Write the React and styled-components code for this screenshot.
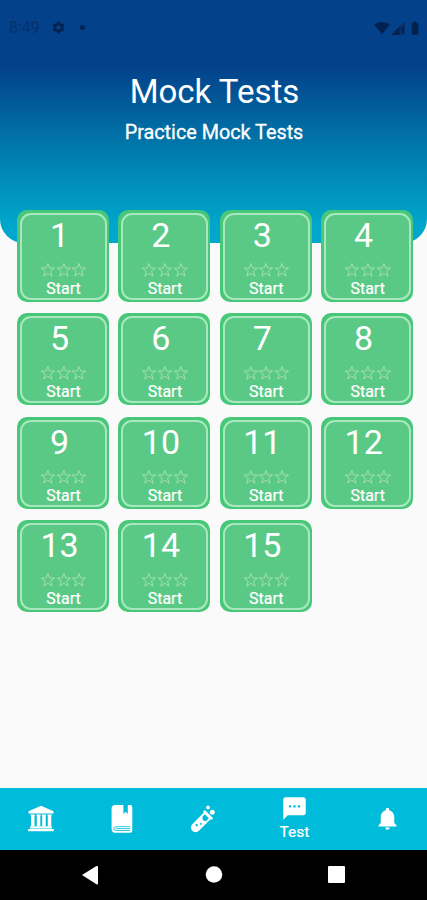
import React from "react";
import styled, { createGlobalStyle } from "styled-components";
import {
  MdSettings,
  MdSignalWifi4Bar,
  MdBatteryFull,
  MdTextsms,
  MdNotifications,
} from "react-icons/md";

const GlobalStyle = createGlobalStyle`
  * {
    box-sizing: border-box;
  }

  body {
    margin: 0;
    background-color: #fafafa;
    font-family: Roboto, sans-serif;
  }
`;

const Screen = styled.main`
  display: flex;
  flex-direction: column;
  width: 427px;
  height: 900px;
  overflow: hidden;
  background-color: #fafafa;
`;

const Header = styled.header`
  flex: none;
  height: 243px;
  border-radius: 0 0 24px 24px;
  background: linear-gradient(180deg, #03418a 0, #03418a 66px, #0080af 158px, #00a6cb 225px);
  color: white;
  text-align: center;
`;

const StatusBar = styled.div`
  display: flex;
  align-items: center;
  justify-content: space-between;
  height: 55px;
  padding: 0 4px 0 9px;
  color: #04224f;
`;

const StatusGroup = styled.div`
  display: flex;
  align-items: center;
`;

const Time = styled.span`
  width: 42px;
  font-size: 16px;
  line-height: 18px;
  text-align: left;
  color: #06306b;
`;

const Dot = styled.i`
  width: 5px;
  height: 5px;
  margin-left: 14px;
  border-radius: 50%;
  background-color: #04224f;
`;

const WifiIcon = styled(MdSignalWifi4Bar)`
  margin-right: 1px;
`;

const BatteryIcon = styled(MdBatteryFull)`
  margin-left: 2px;
`;

const Title = styled.h1`
  margin: 17px 0 0 2px;
  font-size: 33px;
  font-weight: 400;
  line-height: 40px;
`;

const Subtitle = styled.p`
  margin: 9px 0 0 1px;
  font-size: 19.8px;
  font-weight: 400;
  line-height: 24px;
  -webkit-text-stroke: 0.3px white;
`;

const TestGrid = styled.section`
  flex: 1;
  display: grid;
  grid-template-columns: repeat(4, 92px);
  grid-auto-rows: 92px;
  align-content: start;
  column-gap: 9.4px;
  row-gap: 11.4px;
  margin-top: -33px;
  padding-left: 17px;
`;

const TestCard = styled.button`
  padding: 3px 2px 2px 3px;
  border: none;
  border-radius: 10px;
  background-color: #46c878;
  font-family: inherit;
  color: white;
`;

const CardFrame = styled.span`
  display: flex;
  flex-direction: column;
  align-items: center;
  height: 87px;
  border: 2px solid #a9e8bf;
  border-radius: 11px;
  background-color: #5ac985;
`;

const CardNumber = styled.span`
  margin-right: 8px;
  font-size: 34px;
  line-height: 40px;
`;

const Stars = styled.span`
  display: flex;
  height: 16px;
  margin-top: 7px;
`;

const StarIcon = styled.svg`
  width: 15.8px;
  height: 16px;
  fill: none;
  stroke: #a5dfb0;
  stroke-width: 1;
`;

const CardLabel = styled.span`
  margin-top: 1px;
  font-size: 16px;
  line-height: 20px;
  -webkit-text-stroke: 0.2px white;
`;

const TabBar = styled.nav`
  flex: none;
  display: flex;
  height: 62px;
  padding: 0 0 1px 1px;
  background-color: #00bbd9;
`;

const Tab = styled.a`
  display: flex;
  flex-direction: column;
  align-items: center;
  justify-content: center;
  width: ${(props) => props.$width}px;
  color: white;
`;

const TabLabel = styled.span`
  font-size: 15.5px;
  line-height: 20px;
  -webkit-text-stroke: 0.2px white;
`;

const SystemBar = styled.div`
  flex: none;
  height: 50px;
  background-color: black;
`;

const tests = Array.from({ length: 15 }, (_, i) => i + 1);

function Star() {
  return (
    <StarIcon viewBox="0 0 16 16">
      <path d="M8 1.400 9.700 6h5.100l-4.100 3.200 1.500 5L8 11.200l-4.200 3 1.500-5L1.200 6h5.100z" />
    </StarIcon>
  );
}

function SignalIcon() {
  return (
    <svg width="14" height="14" viewBox="0 0 14 14">
      <path d="M14 0v14H0z" fill="#06306b" />
      <path d="M8.5 5.5V14H0zM11 6h2v6h-2z" fill="#04224f" />
    </svg>
  );
}

function BankIcon() {
  return (
    <svg width="28" height="27" viewBox="0 0 28 27" fill="white">
      <path d="M14 .800 26.500 6.300v2.200h-25V6.300z" />
      <path d="M3.500 9.500H8v.9h-.5v10.900H4V10.400h-.5zM9.300 9.500h4.500v.9h-.5v10.900H9.800V10.400h-.5zM14.700 9.500h4.500v.9h-.5v10.900h-3.500V10.400h-.5zM20.400 9.500h4.400v.9h-.5v10.900h-3.500V10.400h-.4z" />
      <path d="M3.200 21.200h21.600v2.300H3.200zM1.200 24.100h25.600v2.200H1.200z" />
    </svg>
  );
}

function BookIcon() {
  return (
    <svg width="22" height="28" viewBox="0 0 22 28">
      <path
        d="M4 0h8.400v9l2.200-2.300L16.800 9V0h2.400q2.100 0 2.100 2v23.500q0 2.200-2.300 2.200H4q-3.400 0-3.400-3.700V3.500Q.600 0 4 0z"
        fill="white"
      />
      <path d="M19.300 21.700H4.500q-1.700 0-1.700 1.900t1.700 1.900h14.800M4.500 23.600h14.800" fill="none" stroke="#00bbd9" strokeWidth=".8" />
    </svg>
  );
}

function TubeIcon() {
  return (
    <svg width="26" height="30" viewBox="0 0 26 30">
      <g transform="translate(10.900 18.200) rotate(45)">
        <path d="M-5.900-11.500H5.900v2.600H4.700V7.500a4.700 4.700 0 0 1-9.400 0V-8.900h-1.200z" fill="white" />
        <path d="M-2.800-8.500h5.600v4.200L0-2.700-2.800-5z" fill="#00bbd9" />
        <circle cx="1.200" cy="1.200" r="1" fill="#00bbd9" />
        <circle cx="-1" cy="5" r="1.200" fill="#00bbd9" />
      </g>
      <circle cx="22.300" cy="8.300" r="2.500" fill="white" />
      <circle cx="18" cy="3.400" r="1.900" fill="white" />
    </svg>
  );
}

function App() {
  return (
    <Screen>
      <GlobalStyle />
      <Header>
        <StatusBar>
          <StatusGroup>
            <Time>8:49</Time>
            <MdSettings size={15} />
            <Dot />
          </StatusGroup>
          <StatusGroup>
            <WifiIcon size={16} />
            <SignalIcon />
            <BatteryIcon size={16} />
          </StatusGroup>
        </StatusBar>
        <Title>Mock Tests</Title>
        <Subtitle>Practice Mock Tests</Subtitle>
      </Header>
      <TestGrid>
        {tests.map((test) => (
          <TestCard key={test} aria-label={`Start test ${test}`}>
            <CardFrame>
              <CardNumber>{test}</CardNumber>
              <Stars>
                <Star />
                <Star />
                <Star />
              </Stars>
              <CardLabel>Start</CardLabel>
            </CardFrame>
          </TestCard>
        ))}
      </TestGrid>
      <TabBar>
        <Tab $width={80} aria-label="Home">
          <BankIcon />
        </Tab>
        <Tab $width={82} aria-label="Books">
          <BookIcon />
        </Tab>
        <Tab $width={79} aria-label="Lab">
          <TubeIcon />
        </Tab>
        <Tab $width={105}>
          <MdTextsms size={27} />
          <TabLabel>Test</TabLabel>
        </Tab>
        <Tab $width={80} aria-label="Notifications">
          <MdNotifications size={27} />
        </Tab>
      </TabBar>
      <SystemBar>
        <svg width="427" height="50" viewBox="0 0 427 50" fill="white">
          <path d="M82 25 96.500 16Q98 15.500 98 17v16.500q0 1.500-1.500.700z" />
          <circle cx="214" cy="24.500" r="8.300" />
          <rect x="328" y="16" width="17" height="17" rx="1" />
        </svg>
      </SystemBar>
    </Screen>
  );
}

export default App;
